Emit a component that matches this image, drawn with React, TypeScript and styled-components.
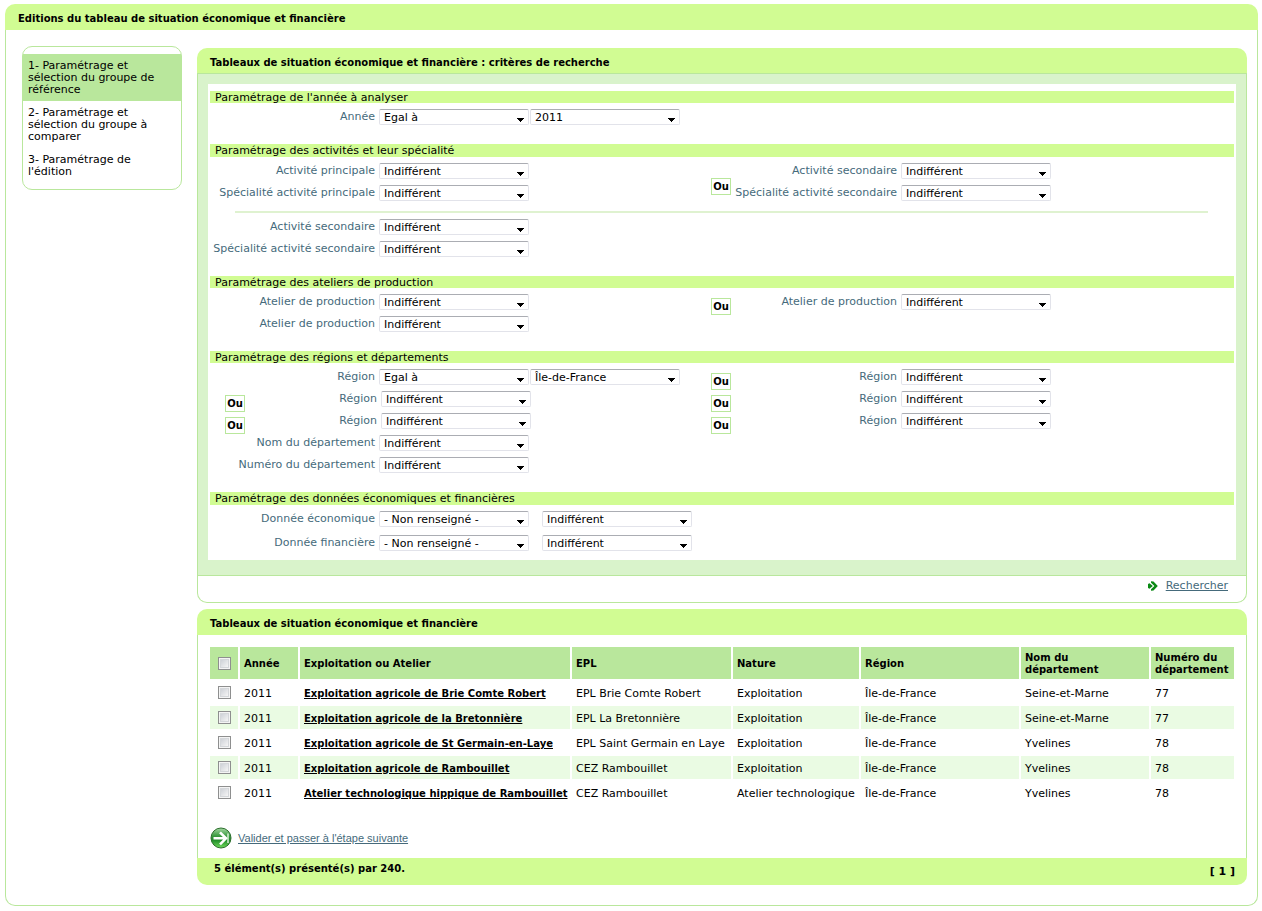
import React, { useId } from "react";
import styled, { createGlobalStyle, css } from "styled-components";

const color = {
  lime: "#d1fc93",
  green: "#b9e79c",
  pale: "#d9f3cb",
  stripe: "#eafbe3",
  rule: "#dff2d0",
  label: "#456a7b",
};

const GlobalStyle = createGlobalStyle`
  * { box-sizing: border-box; }
  body {
    margin: 0;
    background: #fff;
    color: #000;
    font: 11px/12px "DejaVu Sans", Verdana, sans-serif;
  }
`;

/* ---------- Panels ---------- */

const Page = styled.div`
  padding: 4px 4px 5px 5px;
`;

const PanelHeader = styled.header<{ $ruled?: boolean }>`
  padding: 9px 13px ${(p) => (p.$ruled ? 4 : 5)}px;
  background: ${color.lime};
  border-radius: 10px 10px 0 0;
  ${(p) => p.$ruled && css`border-bottom: 1px solid ${color.green};`}
`;

const Title = styled.h2`
  margin: 0;
  font-size: 10px;
  line-height: 12px;
  font-weight: bold;
`;

const PanelBody = styled.div`
  border: 1px solid ${color.green};
  border-top: 0;
  border-radius: 0 0 10px 10px;
`;

const Layout = styled(PanelBody)`
  display: flex;
  align-items: flex-start;
  gap: 15px;
  padding: 16px 10px 20px 16px;
`;

/* ---------- Sidebar ---------- */

const Steps = styled.nav`
  flex: 0 0 160px;
  padding: 7px 0 6px;
  border: 1px solid ${color.green};
  border-radius: 10px;
`;

const Step = styled.a<{ $active?: boolean }>`
  display: block;
  padding: 6px 20px 5px 5px;
  color: #000;
  text-decoration: none;
  background: ${(p) => (p.$active ? color.green : "transparent")};
`;

/* ---------- Search form ---------- */

const Main = styled.main`
  flex: 1;
  min-width: 0;
  display: flex;
  flex-direction: column;
  gap: 6px;
  padding-top: 2px;
`;

const FormArea = styled.div`
  padding: 10px 10px 15px;
  background: ${color.pale};
  border-bottom: 1px solid ${color.green};
`;

const FormSheet = styled.form`
  display: flex;
  flex-direction: column;
  gap: 19px;
  padding: 7px 2px 9px;
  background: #fff;
`;

const Group = styled.fieldset<{ $gap?: number }>`
  display: flex;
  flex-direction: column;
  gap: ${(p) => p.$gap ?? 6}px;
  min-width: 0;
  margin: 0;
  padding: 0;
  border: 0;
`;

const GroupTitle = styled.legend<{ $tall?: boolean }>`
  width: 100%;
  height: ${(p) => (p.$tall ? 13 : 12)}px;
  margin-bottom: 6px;
  padding: 0 5px;
  line-height: 14px;
  background: ${color.lime};
`;

const Line = styled.div`
  display: grid;
  grid-template-columns: 501fr 523fr;
`;

const Stack = styled.div`
  display: flex;
  flex-direction: column;
  gap: 6px;
`;

const Alternative = styled.div<{ $rows?: number }>`
  display: flex;
  align-items: center;
  height: ${(p) => (p.$rows ?? 1) * 22 - 6}px;
`;

const FieldRow = styled.div`
  display: flex;
  height: 16px;
`;

const LabelCell = styled.div<{ $width: number; $inset?: boolean }>`
  display: flex;
  align-items: center;
  width: ${(p) => p.$width}px;
  margin-right: 4px;
  padding-left: ${(p) => (p.$inset ? 15 : 0)}px;
`;

const Label = styled.label`
  display: flex;
  flex: 1;
  justify-content: flex-end;
  align-self: flex-start;
  line-height: 16px;
  white-space: nowrap;
  color: ${color.label};
`;

const Or = styled.span`
  flex: none;
  width: 20px;
  height: 17px;
  margin-top: 9px;
  border: 1px solid ${color.green};
  background: #fff;
  font-size: 10px;
  font-weight: bold;
  line-height: 16px;
  text-align: center;
`;

const SelectBox = styled.span<{ $before: number }>`
  position: relative;
  flex: none;
  width: 150px;
  height: 16px;
  margin-left: ${(p) => p.$before}px;
`;

const NativeSelect = styled.select`
  display: block;
  appearance: none;
  width: 100%;
  height: 16px;
  padding: 1px 16px 0 4px;
  border: 1px solid #e2e3ea;
  border-top-color: #abadb3;
  border-radius: 2px;
  background: #fff;
  color: #000;
  font: inherit;
  line-height: 14px;
`;

const Arrow = styled.svg`
  position: absolute;
  right: 5px;
  top: 9px;
  pointer-events: none;
`;

const Rule = styled.hr`
  width: calc(100% - 51px);
  height: 2px;
  margin: 4px 26px 0 25px;
  border: 0;
  background: ${color.rule};
`;

const FormFooter = styled.div`
  display: flex;
  justify-content: flex-end;
  align-items: flex-start;
  gap: 8px;
  height: 26px;
  padding: 4px 18px 0 0;
`;

const ActionLink = styled.a`
  color: ${color.label};
  text-decoration: underline;
`;

const Glyph = styled.svg`
  display: block;
  flex: none;
`;

const SearchGlyph = styled(Glyph)`
  margin-top: 1px;
`;

/* ---------- Results ---------- */

const Results = styled.table`
  width: 100%;
  table-layout: fixed;
  border-spacing: 2px;
  text-align: left;
`;

const HeadCell = styled.th`
  height: 32px;
  padding: 2px 4px 0;
  font-size: 10px;
  background: ${color.green};
  &:first-child {
    padding-top: 0;
  }
`;

const Cell = styled.td`
  height: 23px;
  padding: 2px 4px 0;
  white-space: nowrap;
  &:first-child {
    padding-top: 0;
  }
`;

const Row = styled.tr`
  &:nth-child(even) > td {
    background: ${color.stripe};
  }
`;

const RowLink = styled.a`
  color: #000;
  font-size: 10px;
  font-weight: bold;
  text-decoration: underline;
`;

const Tick = styled.input`
  display: block;
  appearance: none;
  width: 13px;
  height: 13px;
  margin: 0 0 0 4px;
  border: 1px solid #8e8f8f;
  background: linear-gradient(135deg, #c3c8cf, #f4f4f4 80%);
  box-shadow: inset 0 0 0 1px #f4f4f4, inset 0 0 0 2px #d4d7da;
`;

const ResultsBody = styled.div`
  padding: 10px 10px 9px;
  border: solid ${color.green};
  border-width: 0 1px;
`;

const NextStep = styled.div`
  display: flex;
  align-items: center;
  gap: 6px;
  margin-top: 21px;
  padding-left: 2px;
  font: 11px/14px "Liberation Sans", Arial, sans-serif;
`;

const ResultsFooter = styled.footer`
  display: flex;
  justify-content: space-between;
  height: 27px;
  padding: 5px 12px 0 17px;
  background: ${color.lime};
  border-radius: 0 0 10px 10px;
  font-weight: bold;
`;

const Count = styled.span`
  font-size: 10px;
`;

const Pager = styled.span`
  padding-top: 3px;
`;

/* ---------- Components ---------- */

type SelectProps = { id?: string; value: string; before?: number; name?: string };

function Select({ id, value, before = 0, name }: SelectProps) {
  return (
    <SelectBox $before={before}>
      <NativeSelect id={id} aria-label={name} defaultValue={value}>
        <option>{value}</option>
      </NativeSelect>
      <Arrow width="7" height="4" viewBox="0 0 7 4" shapeRendering="crispEdges" aria-hidden="true">
        <path d="M0 0h7v1H6v1H5v1H4v1H3V3H2V2H1V1H0z" />
      </Arrow>
    </SelectBox>
  );
}

type FieldProps = {
  label: string;
  value?: string;
  second?: string;
  apart?: boolean;
  or?: boolean;
  right?: boolean;
};

function Field({ label, value = "Indifférent", second, apart, or, right }: FieldProps) {
  const id = useId();
  return (
    <FieldRow>
      <LabelCell $width={or ? 167 : right ? 166 : 165} $inset={or}>
        {or && <Or>Ou</Or>}
        <Label htmlFor={id}>{label}</Label>
      </LabelCell>
      <Select id={id} value={value} />
      {second && <Select value={second} before={apart ? 13 : 1} name={`${label} : valeur`} />}
    </FieldRow>
  );
}

const steps = [
  "1- Paramétrage et sélection du groupe de référence",
  "2- Paramétrage et sélection du groupe à comparer",
  "3- Paramétrage de l'édition",
];

const rows = [
  ["2011", "Exploitation agricole de Brie Comte Robert", "EPL Brie Comte Robert", "Exploitation", "Île-de-France", "Seine-et-Marne", "77"],
  ["2011", "Exploitation agricole de la Bretonnière", "EPL La Bretonnière", "Exploitation", "Île-de-France", "Seine-et-Marne", "77"],
  ["2011", "Exploitation agricole de St Germain-en-Laye", "EPL Saint Germain en Laye", "Exploitation", "Île-de-France", "Yvelines", "78"],
  ["2011", "Exploitation agricole de Rambouillet", "CEZ Rambouillet", "Exploitation", "Île-de-France", "Yvelines", "78"],
  ["2011", "Atelier technologique hippique de Rambouillet", "CEZ Rambouillet", "Atelier technologique", "Île-de-France", "Yvelines", "78"],
];

const columns: { title: string; width?: number }[] = [
  { title: "Année", width: 58 },
  { title: "Exploitation ou Atelier", width: 270 },
  { title: "EPL", width: 159 },
  { title: "Nature", width: 126 },
  { title: "Région" },
  { title: "Nom du département", width: 128 },
  { title: "Numéro du département", width: 83 },
];

function SearchPanel() {
  return (
    <section>
      <PanelHeader $ruled>
        <Title>Tableaux de situation économique et financière : critères de recherche</Title>
      </PanelHeader>
      <PanelBody>
        <FormArea>
          <FormSheet>
            <Group>
              <GroupTitle>Paramétrage de l'année à analyser</GroupTitle>
              <Field label="Année" value="Egal à" second="2011" />
            </Group>

            <Group>
              <GroupTitle $tall>Paramétrage des activités et leur spécialité</GroupTitle>
              <Line>
                <Stack>
                  <Field label="Activité principale" />
                  <Field label="Spécialité activité principale" />
                </Stack>
                <Alternative $rows={2}>
                  <Or>Ou</Or>
                  <Stack>
                    <Field right label="Activité secondaire" />
                    <Field right label="Spécialité activité secondaire" />
                  </Stack>
                </Alternative>
              </Line>
              <Rule />
              <Field label="Activité secondaire" />
              <Field label="Spécialité activité secondaire" />
            </Group>

            <Group>
              <GroupTitle>Paramétrage des ateliers de production</GroupTitle>
              <Line>
                <Field label="Atelier de production" />
                <Alternative>
                  <Or>Ou</Or>
                  <Field right label="Atelier de production" />
                </Alternative>
              </Line>
              <Field label="Atelier de production" />
            </Group>

            <Group>
              <GroupTitle>Paramétrage des régions et départements</GroupTitle>
              {[0, 1, 2].map((i) => (
                <Line key={i}>
                  {i === 0 ? (
                    <Field label="Région" value="Egal à" second="Île-de-France" />
                  ) : (
                    <Field or label="Région" />
                  )}
                  <Alternative>
                    <Or>Ou</Or>
                    <Field right label="Région" />
                  </Alternative>
                </Line>
              ))}
              <Field label="Nom du département" />
              <Field label="Numéro du département" />
            </Group>

            <Group $gap={8}>
              <GroupTitle $tall>Paramétrage des données économiques et financières</GroupTitle>
              <Field label="Donnée économique" value="- Non renseigné -" second="Indifférent" apart />
              <Field label="Donnée financière" value="- Non renseigné -" second="Indifférent" apart />
            </Group>
          </FormSheet>
        </FormArea>
        <FormFooter>
          <SearchGlyph width="10" height="10" viewBox="0 0 10 10" aria-hidden="true">
            <path d="M0 3 1.500 2.200 4.800 5 1.500 7.800 0 7z" fill="#0a8a14" />
            <path d="M3 0.300 5.500 0.500 9.800 5 5.500 9.500 3 9.700 3 8.300 6.400 5 3 1.700z" fill="#0a8a14" />
          </SearchGlyph>
          <ActionLink href="#rechercher">Rechercher</ActionLink>
        </FormFooter>
      </PanelBody>
    </section>
  );
}

function NextGlyph() {
  return (
    <Glyph width="22" height="22" viewBox="0 0 22 22" aria-hidden="true">
      <defs>
        <linearGradient id="ball" x1="0" y1="0" x2="0" y2="1">
          <stop offset="0" stopColor="#a5d8a2" />
          <stop offset=".4" stopColor="#3a9a40" />
          <stop offset=".6" stopColor="#1f8a28" />
          <stop offset="1" stopColor="#6fdc5c" />
        </linearGradient>
      </defs>
      <circle cx="11" cy="11" r="10" fill="url(#ball)" stroke="#2b6e2c" />
      <path d="M3.500 11.300H15M10 5.300l6 6-6 6" fill="none" stroke="#fff" strokeWidth="2.600" />
      <path d="M18 6.500v9.500" stroke="#e6f6e4" strokeWidth="1.400" />
    </Glyph>
  );
}

function ResultsPanel() {
  return (
    <section>
      <PanelHeader>
        <Title>Tableaux de situation économique et financière</Title>
      </PanelHeader>
      <ResultsBody>
        <Results>
          <colgroup>
            <col style={{ width: 28 }} />
            {columns.map((c) => (
              <col key={c.title} style={{ width: c.width }} />
            ))}
          </colgroup>
          <thead>
            <tr>
              <HeadCell>
                <Tick type="checkbox" aria-label="Tout sélectionner" />
              </HeadCell>
              {columns.map((c) => (
                <HeadCell key={c.title} scope="col">{c.title}</HeadCell>
              ))}
            </tr>
          </thead>
          <tbody>
            {rows.map((row) => (
              <Row key={row[1]}>
                <Cell>
                  <Tick type="checkbox" aria-label={row[1]} />
                </Cell>
                {row.map((text, i) => (
                  <Cell key={i}>{i === 1 ? <RowLink href="#exploitation">{text}</RowLink> : text}</Cell>
                ))}
              </Row>
            ))}
          </tbody>
        </Results>
        <NextStep>
          <NextGlyph />
          <ActionLink href="#etape-suivante">Valider et passer à l'étape suivante</ActionLink>
        </NextStep>
      </ResultsBody>
      <ResultsFooter>
        <Count>5 élément(s) présenté(s) par 240.</Count>
        <Pager>[ 1 ]</Pager>
      </ResultsFooter>
    </section>
  );
}

export default function App() {
  return (
    <Page>
      <GlobalStyle />
      <PanelHeader>
        <Title as="h1">Editions du tableau de situation économique et financière</Title>
      </PanelHeader>
      <Layout>
        <Steps>
          {steps.map((text, i) => (
            <Step key={text} href={`#etape-${i + 1}`} $active={i === 0}>{text}</Step>
          ))}
        </Steps>
        <Main>
          <SearchPanel />
          <ResultsPanel />
        </Main>
      </Layout>
    </Page>
  );
}
